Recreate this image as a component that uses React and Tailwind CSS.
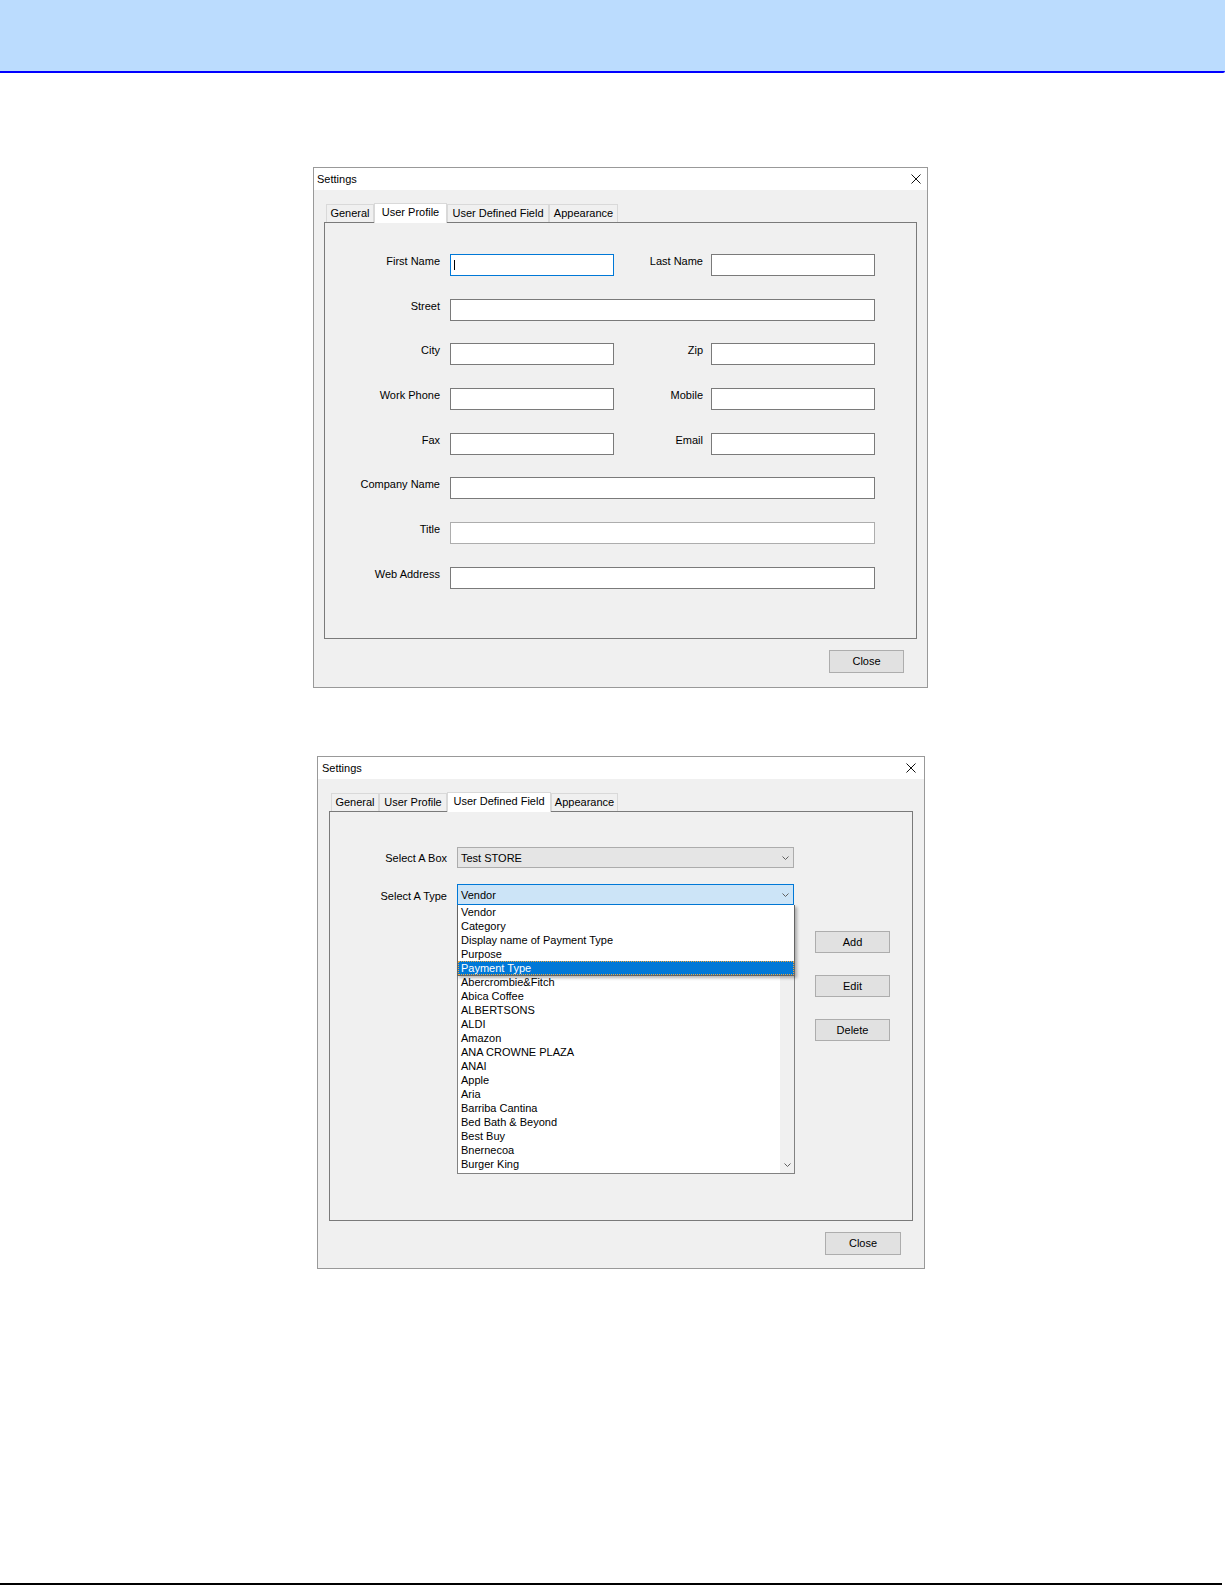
import React from 'react';

const UI_FONT = "font-['Liberation_Sans',Arial,sans-serif]";

const vendors = [
  'Abercrombie&Fitch',
  'Abica Coffee',
  'ALBERTSONS',
  'ALDI',
  'Amazon',
  'ANA CROWNE PLAZA',
  'ANAI',
  'Apple',
  'Aria',
  'Barriba Cantina',
  'Bed Bath & Beyond',
  'Best Buy',
  'Bnernecoa',
  'Burger King',
];

const typeOptions = ['Vendor', 'Category', 'Display name of Payment Type', 'Purpose', 'Payment Type'];

const CloseGlyph = () => (
  <svg width="10" height="10" viewBox="0 0 10 10" className="block">
    <path d="M0.5 0.5 L9.5 9.5 M9.5 0.5 L0.5 9.5" stroke="#111" strokeWidth="1" fill="none" />
  </svg>
);

const Chevron = () => (
  <svg width="7" height="4" viewBox="0 0 7 4" className="block">
    <path d="M0.5 0.5 L3.5 3.5 L6.5 0.5" stroke="#606060" strokeWidth="1" fill="none" />
  </svg>
);

const WinButton = ({ children, className = '' }) => (
  <button
    className={`flex items-center justify-center border border-[#adadad] bg-[#e1e1e1] text-[11px] leading-[13px] text-black ${className}`}
  >
    {children}
  </button>
);

// one tab header; the selected one is white and sits over the panel's top edge
const Tab = ({ label, active, width }) =>
  active ? (
    <div
      className={`relative z-10 -mb-px flex h-[20px] justify-center border border-b-0 border-[#d9d9d9] bg-white pt-[2px] leading-[13px] ${width}`}
    >
      {label}
    </div>
  ) : (
    <div
      className={`flex h-[18px] justify-center border border-b-0 border-[#d9d9d9] bg-[#f0f0f0] pt-[2px] leading-[13px] ${width}`}
    >
      {label}
    </div>
  );

const TextBox = ({ width, focused, soft }) => (
  <div
    className={`relative h-[22px] shrink-0 border bg-white ${width} ${
      focused ? 'border-[#0078d7]' : soft ? 'border-[#adadad]' : 'border-[#7a7a7a]'
    }`}
  >
    {focused && <div className="absolute left-[3px] top-[5px] h-[10px] w-px bg-black" />}
  </div>
);

const Label = ({ children, width }) => (
  <div className={`shrink-0 pt-px text-right leading-[13px] ${width}`}>{children}</div>
);

const ProfileDialog = () => (
  <div className="ml-[313px] mt-[94px] w-[615px] border border-[#999999] bg-[#f0f0f0]">
    <div className="flex h-[22px] items-center justify-between bg-white pl-[3px] pr-[6px]">
      <span className="leading-[13px]">Settings</span>
      <CloseGlyph />
    </div>

    <div className="ml-[12px] mt-[13px] flex h-[19px] items-end">
      <Tab label="General" width="w-[48px]" />
      <Tab label="User Profile" width="w-[73px]" active />
      <Tab label="User Defined Field" width="w-[102px]" />
      <Tab label="Appearance" width="w-[69px]" />
    </div>

    <div className="mx-[10px] flex h-[417px] flex-col gap-[22.7px] border border-[#7a7a7a] pt-[31px]">
      <div className="flex">
        <Label width="w-[115px]">First Name</Label>
        <div className="ml-[10px]">
          <TextBox width="w-[164px]" focused />
        </div>
        <Label width="w-[89px]">Last Name</Label>
        <div className="ml-[8px]">
          <TextBox width="w-[164px]" />
        </div>
      </div>
      <div className="flex">
        <Label width="w-[115px]">Street</Label>
        <div className="ml-[10px]">
          <TextBox width="w-[425px]" />
        </div>
      </div>
      <div className="flex">
        <Label width="w-[115px]">City</Label>
        <div className="ml-[10px]">
          <TextBox width="w-[164px]" />
        </div>
        <Label width="w-[89px]">Zip</Label>
        <div className="ml-[8px]">
          <TextBox width="w-[164px]" />
        </div>
      </div>
      <div className="flex">
        <Label width="w-[115px]">Work Phone</Label>
        <div className="ml-[10px]">
          <TextBox width="w-[164px]" />
        </div>
        <Label width="w-[89px]">Mobile</Label>
        <div className="ml-[8px]">
          <TextBox width="w-[164px]" />
        </div>
      </div>
      <div className="flex">
        <Label width="w-[115px]">Fax</Label>
        <div className="ml-[10px]">
          <TextBox width="w-[164px]" />
        </div>
        <Label width="w-[89px]">Email</Label>
        <div className="ml-[8px]">
          <TextBox width="w-[164px]" />
        </div>
      </div>
      <div className="flex">
        <Label width="w-[115px]">Company Name</Label>
        <div className="ml-[10px]">
          <TextBox width="w-[425px]" />
        </div>
      </div>
      <div className="flex">
        <Label width="w-[115px]">Title</Label>
        <div className="ml-[10px]">
          <TextBox width="w-[425px]" soft />
        </div>
      </div>
      <div className="flex">
        <Label width="w-[115px]">Web Address</Label>
        <div className="ml-[10px]">
          <TextBox width="w-[425px]" />
        </div>
      </div>
    </div>

    <div className="flex justify-end pb-[14px] pr-[23px] pt-[11px]">
      <WinButton className="h-[23px] w-[75px]">Close</WinButton>
    </div>
  </div>
);

const FieldsDialog = () => (
  <div className="ml-[317px] mt-[68px] w-[608px] border border-[#999999] bg-[#f0f0f0]">
    <div className="flex h-[22px] items-center justify-between bg-white pl-[4px] pr-[8px]">
      <span className="leading-[13px]">Settings</span>
      <CloseGlyph />
    </div>

    <div className="ml-[13px] mt-[12px] flex h-[20px] items-end">
      <Tab label="General" width="w-[48px]" />
      <Tab label="User Profile" width="w-[68px]" />
      <Tab label="User Defined Field" width="w-[104px]" active />
      <Tab label="Appearance" width="w-[67px]" />
    </div>

    <div className="mx-[11px] h-[410px] border border-[#7a7a7a] pt-[35px]">
      <div className="flex">
        <div className="mt-[5px] w-[117px] shrink-0 text-right leading-[13px]">Select A Box</div>
        <div className="ml-[10px] flex h-[21px] w-[337px] items-center justify-between border border-[#acacac] bg-[#e5e5e5] pl-[3px] pr-[4px] pt-px">
          <span className="leading-[13px]">Test STORE</span>
          <Chevron />
        </div>
      </div>

      <div className="mt-[16px] flex">
        <div className="mt-[6px] w-[117px] shrink-0 text-right leading-[13px]">Select A Type</div>
        <div className="relative ml-[10px]">
          <div className="flex h-[21px] w-[337px] items-center justify-between border border-[#0078d7] bg-[#cce4f7] pl-[3px] pr-[4px] pt-px">
            <span className="leading-[13px]">Vendor</span>
            <Chevron />
          </div>

          {/* open drop-down of the type combo */}
          <div className="absolute left-0 top-full z-20 w-[338px] border border-t-0 border-[#646464] bg-white shadow-[2px_2px_3px_rgba(0,0,0,0.3)]">
            {typeOptions.map((opt) =>
              opt === 'Payment Type' ? (
                <div
                  key={opt}
                  className="h-[14px] border border-dotted border-[#f0a73a] bg-[#0078d7] pl-[2px] leading-[12px] text-white"
                >
                  {opt}
                </div>
              ) : (
                <div key={opt} className="h-[14px] pl-[3px] leading-[14px]">
                  {opt}
                </div>
              )
            )}
          </div>
        </div>
      </div>

      <div className="ml-[127px] flex">
        <div className="mt-[69px] flex h-[200px] w-[338px] border border-[#828282] bg-white">
          <div className="flex-1 pl-[3px]">
            {vendors.map((v) => (
              <div key={v} className="h-[14px] leading-[14px]">
                {v}
              </div>
            ))}
          </div>
          <div className="flex w-[14px] flex-col justify-end bg-[#f0f0f0] pb-[6px] pl-[4px]">
            <Chevron />
          </div>
        </div>

        <div className="ml-[20px] mt-[26px] flex flex-col gap-[22px]">
          <WinButton className="h-[22px] w-[75px]">Add</WinButton>
          <WinButton className="h-[22px] w-[75px]">Edit</WinButton>
          <WinButton className="h-[22px] w-[75px]">Delete</WinButton>
        </div>
      </div>
    </div>

    <div className="flex justify-end pb-[13px] pr-[23px] pt-[11px]">
      <WinButton className="h-[23px] w-[76px]">Close</WinButton>
    </div>
  </div>
);

export default function App() {
  return (
    <div className={`flex h-[1585px] w-[1225px] flex-col bg-white text-[11px] text-black ${UI_FONT}`}>
      <header className="h-[73px] shrink-0 rounded-br-[2px] border-b-2 border-[#0000ff] bg-[#bbdcfe]" />
      <ProfileDialog />
      <FieldsDialog />
      <div className="mt-auto h-[2px] w-[1222px] bg-black" />
    </div>
  );
}
